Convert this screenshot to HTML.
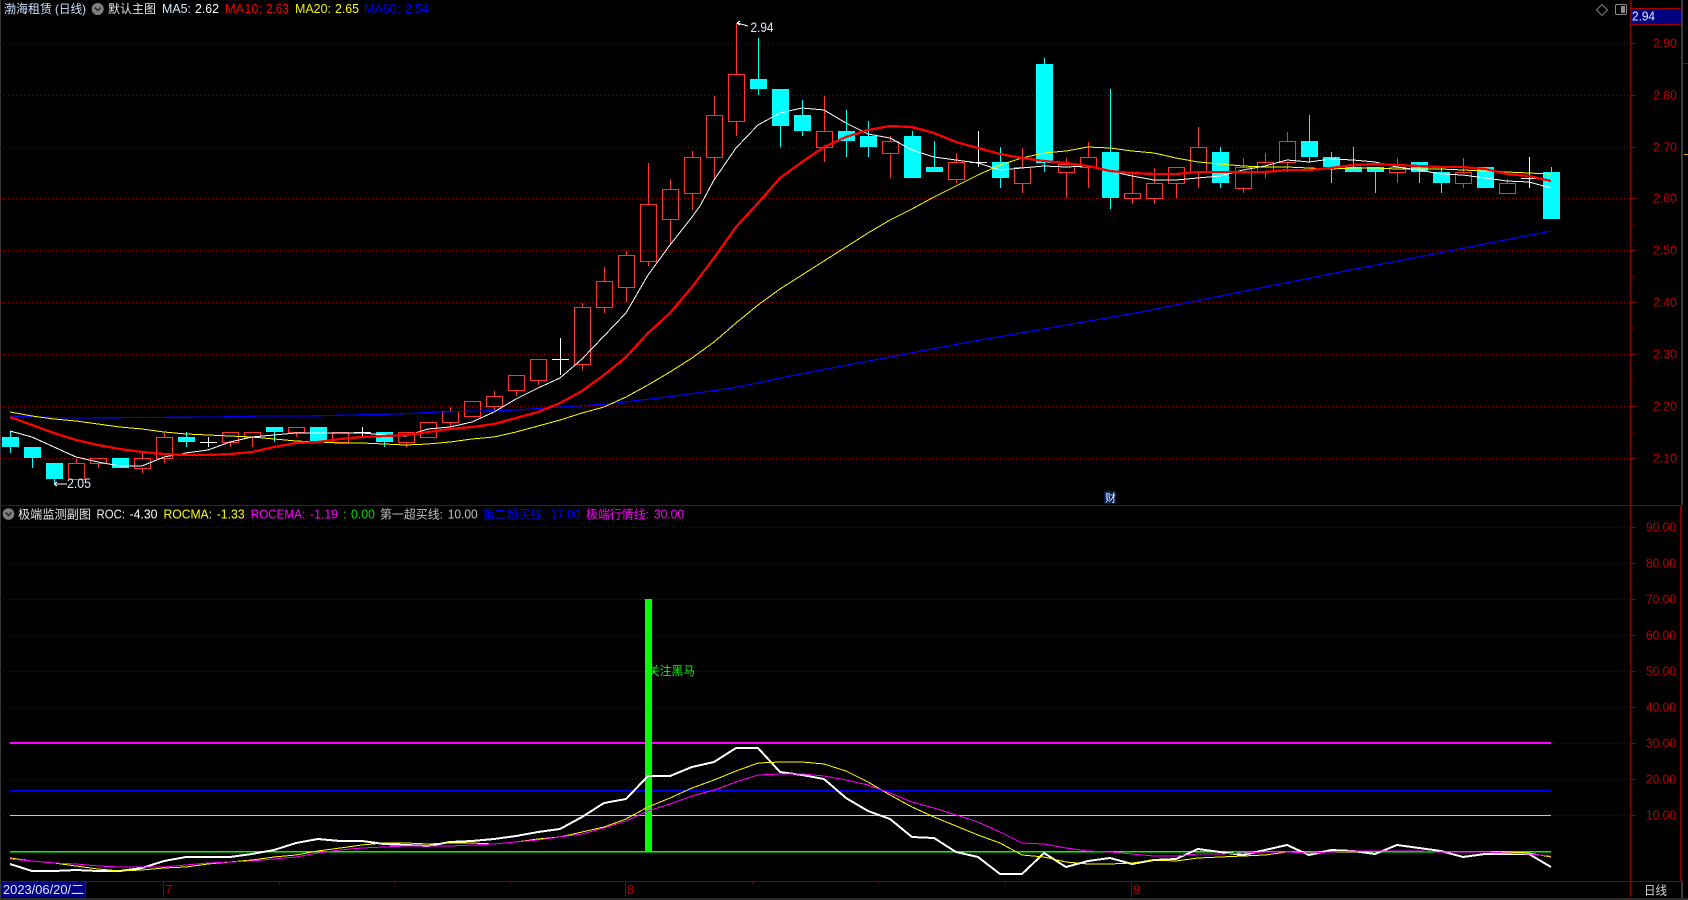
<!DOCTYPE html>
<html lang="zh"><head><meta charset="utf-8"><title>渤海租赁</title>
<style>
html,body{margin:0;padding:0;background:#000;width:1688px;height:900px;overflow:hidden}
svg{display:block}
text{font-family:"Liberation Sans","Noto Sans CJK SC",sans-serif;font-size:13px}
.c{font-size:12px}
.ax{fill:#bb0000}
</style></head><body>
<svg width="1688" height="900" viewBox="0 0 1688 900" xmlns="http://www.w3.org/2000/svg">
<rect width="1688" height="900" fill="#000"/>
<rect x="0" y="0" width="1" height="898" fill="#3a3a3a"/>

<g shape-rendering="crispEdges" fill="none">
<!-- main grid -->
<path stroke="#900000" stroke-dasharray="1 3" d="M0 43.5H1630M0 95.5H1630M0 147.5H1630M0 198.5H1630M0 250.5H1630M0 302.5H1630M0 354.5H1630M0 406.5H1630M0 458.5H1630"/>
<!-- sub grid -->
<path stroke="#700000" stroke-dasharray="1 3" d="M0 527.5H1630M0 563.5H1630M0 599.5H1630M0 635.5H1630M0 671.5H1630M0 707.5H1630M0 743.5H1630M0 779.5H1630M0 815.5H1630"/>
<!-- frame and axis -->
<path stroke="#8a0000" d="M0 505.5H1681M0 881.5H1681M1630.5 0V897M85.5 881V897M163.5 881V897M625.5 881V897M1131.5 881V897M279.5 881V884M394.5 881V884M510.5 881V884M752.5 881V884M878.5 881V884M1005.5 881V884"/>
<path stroke="#8a0000" d="M1630 43.5h6M1630 95.5h6M1630 147.5h6M1630 198.5h6M1630 250.5h6M1630 302.5h6M1630 354.5h6M1630 406.5h6M1630 458.5h6M1630 69.5h3M1630 121.5h3M1630 173.5h3M1630 224.5h3M1630 276.5h3M1630 328.5h3M1630 380.5h3M1630 432.5h3M1630 527.5h6M1630 563.5h6M1630 599.5h6M1630 635.5h6M1630 671.5h6M1630 707.5h6M1630 743.5h6M1630 779.5h6M1630 815.5h6M1630 545.5h3M1630 581.5h3M1630 617.5h3M1630 653.5h3M1630 689.5h3M1630 725.5h3M1630 761.5h3M1630 797.5h3M1630 833.5h3"/>
<rect x="1681" y="0" width="2" height="505" fill="#3a3a3a"/>
<rect x="1680" y="505" width="2" height="376" fill="#800000"/>
<rect x="1681" y="881" width="2" height="17" fill="#3a3a3a"/>
<rect x="1683" y="63" width="5" height="1" fill="#8a0000"/>
<rect x="1684" y="154" width="4" height="1" fill="#e0a000"/>
<rect x="0" y="898" width="1688" height="2" fill="#2b2b2b"/>
<rect x="1631" y="9" width="50" height="15" fill="#000080"/>
<path stroke="#a00000" d="M1630 8.5H1681M1630 24.5H1681"/>

<!-- candles: red hollow -->
<path stroke="#ff3232" d="M68.5 463.5h16v16h-16zM76.5 459V463M90.5 458.5h16v5h-16zM98.5 464V468M134.5 458.5h16v10h-16zM142.5 453V458M142.5 469V473M156.5 437.5h16v21h-16zM164.5 433V437M164.5 459V463M222.5 432.5h16v10h-16zM230.5 443V447M244.5 432.5h16v5h-16zM252.5 438V447M288.5 427.5h16v5h-16zM296.5 433V437M332.5 432.5h16v10h-16zM398.5 432.5h16v10h-16zM406.5 443V447M420.5 422.5h16v15h-16zM442.5 411.5h16v11h-16zM450.5 407V411M450.5 423V427M464.5 401.5h16v15h-16zM486.5 396.5h16v10h-16zM494.5 391V396M494.5 407V411M508.5 375.5h16v15h-16zM516.5 391V396M530.5 359.5h16v21h-16zM538.5 381V385M574.5 307.5h16v57h-16zM582.5 303V307M582.5 365V370M596.5 281.5h16v26h-16zM604.5 267V281M604.5 308V313M618.5 255.5h16v32h-16zM626.5 251V255M626.5 288V302M640.5 204.5h16v57h-16zM648.5 163V204M648.5 262V266M662.5 189.5h16v30h-16zM670.5 179V189M670.5 220V245M684.5 157.5h16v36h-16zM692.5 151V157M692.5 194V210M706.5 115.5h16v42h-16zM714.5 96V115M714.5 158V178M728.5 74.5h16v47h-16zM736.5 23V74M736.5 122V136M816.5 131.5h16v16h-16zM824.5 96V131M824.5 148V162M882.5 141.5h16v12h-16zM890.5 136V141M890.5 154V178M948.5 162.5h16v17h-16zM956.5 153V162M956.5 180V183M1014.5 167.5h16v16h-16zM1022.5 148V167M1022.5 184V193M1058.5 164.5h16v8h-16zM1066.5 158V164M1066.5 173V198M1080.5 157.5h16v10h-16zM1088.5 142V157M1088.5 168V188M1124.5 193.5h16v5h-16zM1132.5 173V193M1132.5 199V204M1146.5 183.5h16v15h-16zM1154.5 168V183M1154.5 199V204M1168.5 167.5h16v16h-16zM1176.5 184V198M1190.5 147.5h16v25h-16zM1198.5 127V147M1198.5 173V188M1235.5 167.5h16v21h-16zM1243.5 158V167M1243.5 189V193M1257.5 162.5h16v9h-16zM1265.5 153V162M1265.5 172V178M1279.5 141.5h16v21h-16zM1287.5 132V141M1287.5 163V172M1389.5 167.5h16v5h-16zM1397.5 158V167M1397.5 173V183M1455.5 172.5h16v11h-16zM1463.5 158V172M1463.5 184V188M1499.5 183.5h16v10h-16zM1507.5 179V183"/>
<!-- candles: cyan -->
<path stroke="#00ffff" d="M10.5 431V453M32.5 447V468M54.5 463V483M186.5 432V447M274.5 427V442M384.5 432V447M758.5 38V95M780.5 89V147M802.5 100V136M846.5 110V157M868.5 121V157M912.5 131V178M934.5 141V172M1000.5 147V188M1044.5 58V172M1110.5 89V209M1220.5 147V188M1309.5 115V162M1331.5 152V183M1353.5 147V172M1375.5 167V193M1419.5 162V183M1441.5 167V193M1551.5 167V219"/>
<path fill="#00ffff" d="M2 437h17v10h-17zM24 447h17v11h-17zM46 463h17v16h-17zM112 458h17v10h-17zM178 437h17v5h-17zM266 427h17v5h-17zM310 427h17v15h-17zM376 432h17v10h-17zM750 79h17v10h-17zM772 89h17v37h-17zM794 115h17v16h-17zM838 131h17v10h-17zM860 136h17v11h-17zM904 136h17v42h-17zM926 167h17v5h-17zM992 162h17v16h-17zM1036 64h17v99h-17zM1102 152h17v46h-17zM1212 152h17v31h-17zM1301 141h17v16h-17zM1323 157h17v10h-17zM1345 167h17v5h-17zM1367 167h17v5h-17zM1411 162h17v10h-17zM1433 172h17v11h-17zM1477 167h17v21h-17zM1543 172h17v47h-17z"/>
<!-- doji -->
<path stroke="#ffffff" d="M200 442.5H217M208.5 437V447M354 432.5H371M362.5 427V437M552 359.5H569M560.5 338V375M970 162.5H987M978.5 131V167M1521 178.5H1538M1529.5 157V188"/>

<!-- MA lines -->
<polyline stroke="#0000ff" stroke-width="1.2" points="10,416 70,418 217,417 263,416 307,416 350,415 397,414 440,412 517,410 607,404 667,397 733,388 800,374 969,342 1141,312 1345,271 1408,259 1551,231"/>
<polyline stroke="#ffff00" stroke-width="1" points="10,412 32,416 54,419 76,421 98,424 120,427 142,429 164,432 186,434 208,435 230,436 252,437 274,439 296,441 318,442 340,443 362,443 384,444 406,445 428,444 450,442 472,439 494,437 516,432 538,426 560,420 582,413 604,407 626,397 648,385 670,372 692,358 714,342 736,323 758,305 780,289 802,275 824,261 846,247 868,233 890,220 912,209 934,197 956,186 978,175 1000,165 1022,158 1044,153 1066,151 1088,147 1110,148 1132,151 1154,153 1176,158 1198,162 1220,164 1243,166 1265,167 1287,167 1309,168 1331,169 1353,168 1375,168 1397,169 1419,169 1441,169 1463,170 1485,171 1507,172 1529,173 1551,174"/>
<polyline stroke="#ffffff" stroke-width="1" points="10,431 32,437 54,447 76,457 98,462 120,466 142,466 164,457 186,453 208,450 230,442 252,437 274,435 296,433 318,433 340,433 362,433 384,435 406,436 428,429 450,427 472,422 494,412 516,399 538,388 560,378 582,359 604,336 626,313 648,275 670,245 692,217 700,206 714,180 736,148 758,125 780,113 802,108 824,110 846,123 868,134 890,138 912,150 934,157 956,160 978,163 1000,170 1022,168 1044,166 1066,167 1088,166 1110,171 1132,176 1154,180 1176,180 1198,178 1220,176 1243,170 1265,166 1287,160 1309,162 1331,159 1353,160 1375,162 1397,167 1419,170 1441,174 1463,175 1485,178 1507,181 1529,182 1551,188"/>
<polyline stroke="#ff0000" stroke-width="2.3" points="10,417 32,425 54,433 76,440 98,445 120,449 142,452 164,454 186,455 208,455 230,454 252,452 274,447 296,443 318,442 340,439 362,437 384,436 406,435 428,432 450,429 472,427 494,424 516,418 538,412 560,403 582,391 604,375 626,357 648,333 670,313 692,287 714,258 736,227 758,203 780,178 802,162 824,147 846,137 868,130 890,126 912,127 934,133 956,142 978,148 1000,154 1022,158 1044,161 1066,163 1088,166 1110,171 1132,173 1154,174 1176,174 1198,172 1220,172 1243,172 1265,172 1287,170 1309,170 1331,168 1353,165 1375,164 1397,165 1419,166 1441,167 1463,167 1485,169 1507,174 1529,176 1551,181"/>

<!-- sub panel -->
<rect x="10" y="742" width="1541" height="2" fill="#ff00ff"/>
<rect x="10" y="790" width="1541" height="1.4" fill="#0000ff"/>
<rect x="10" y="815" width="1541" height="1" fill="#c8c8c8"/>
<rect x="10" y="851" width="1541" height="1.4" fill="#00ff00"/>
<rect x="645" y="599" width="7" height="252" fill="#00ff00"/>
<polyline stroke="#ffffff" stroke-width="2" points="10,864 32,871 54,871 76,870 98,871 120,871 142,868 164,861 186,857 208,857 230,857 252,854 274,850 296,843 318,839 340,841 362,841 384,844 406,845 428,846 450,842 472,841 494,839 516,836 538,832 560,829 582,817 604,803 626,799 648,776 670,776 692,767 714,762 736,748 758,748 780,772 802,775 824,779 846,798 868,811 890,819 912,837 934,838 956,852 978,857 1000,874 1022,874 1044,853 1066,867 1088,861 1110,858 1132,864 1154,860 1176,859 1198,849 1220,852 1243,855 1265,850 1287,845 1309,855 1331,850 1353,851 1375,854 1397,845 1419,848 1441,851 1463,857 1485,854 1507,854 1529,854 1551,867"/>
<polyline stroke="#ffff00" stroke-width="1" points="10,858 32,861 54,863 76,866 98,869 120,871 142,870 164,868 186,867 208,864 230,862 252,860 274,857 296,855 318,851 340,848 362,845 384,843 406,843 428,844 450,843 472,843 494,844 516,842 538,839 560,837 582,832 604,827 626,819 648,807 670,798 692,788 714,780 736,771 758,763 780,762 802,762 824,764 846,771 868,782 890,795 912,807 934,817 956,826 978,835 1000,843 1022,855 1044,857 1066,862 1088,864 1110,864 1132,863 1154,860 1176,861 1198,858 1220,857 1243,856 1265,855 1287,852 1309,853 1331,852 1353,852 1375,851 1397,851 1419,851 1441,852 1463,852 1485,852 1507,852 1529,853 1551,857"/>
<polyline stroke="#ff00ff" stroke-width="1" points="10,859 32,861 54,863 76,864 98,866 120,867 142,867 164,867 186,865 208,863 230,862 252,861 274,859 296,857 318,853 340,850 362,848 384,847 406,846 428,846 450,846 472,845 494,844 516,842 538,840 560,837 582,834 604,828 626,821 648,811 670,804 692,796 714,790 736,782 758,775 780,774 802,774 824,776 846,780 868,785 890,793 912,802 934,808 956,815 978,822 1000,832 1022,843 1044,844 1066,848 1088,851 1110,852 1132,854 1154,856 1176,856 1198,854 1220,854 1243,853 1265,852 1287,852 1309,853 1331,852 1353,851 1375,851 1397,851 1419,851 1441,852 1463,852 1485,852 1507,853 1529,854 1551,856"/>
<!-- high/low arrows -->
<path stroke="#ffffff" d="M737 23L748 26M737 23l3 -2M737 23l3 2M54 484H67M54 484l3 -2M54 484l3 2"/>
<rect x="1" y="882" width="84" height="15" fill="#000080"/>
<rect x="1104" y="491" width="12" height="13" fill="#001a50"/>
</g>

<!-- legend top -->
<g>
<text class="c" x="4" y="13" fill="#cfe2ff" textLength="48" lengthAdjust="spacingAndGlyphs">渤海租赁</text>
<text class="c" x="55" y="13" fill="#cfe2ff" textLength="31" lengthAdjust="spacingAndGlyphs">(日线)</text>
<circle cx="97.7" cy="9" r="6" fill="#808080"/>
<path d="M94.7 7.5l3 3 3-3" fill="none" stroke="#222" stroke-width="1.4"/>
<text class="c" x="108" y="13" fill="#e6e6e6" textLength="48" lengthAdjust="spacingAndGlyphs">默认主图</text>
<text x="162" y="13" fill="#d6ecff" textLength="29" lengthAdjust="spacingAndGlyphs">MA5:</text>
<text x="195" y="13" fill="#ffffff" textLength="24" lengthAdjust="spacingAndGlyphs">2.62</text>
<text x="225" y="13" fill="#ee0000" textLength="37" lengthAdjust="spacingAndGlyphs">MA10:</text>
<text x="266" y="13" fill="#ff0000" textLength="23" lengthAdjust="spacingAndGlyphs">2.63</text>
<text x="295" y="13" fill="#eeee00" textLength="36" lengthAdjust="spacingAndGlyphs">MA20:</text>
<text x="335" y="13" fill="#ffff00" textLength="24" lengthAdjust="spacingAndGlyphs">2.65</text>
<text x="364" y="13" fill="#0000f0" textLength="36" lengthAdjust="spacingAndGlyphs">MA60:</text>
<text x="405" y="13" fill="#0000ff" textLength="24" lengthAdjust="spacingAndGlyphs">2.54</text>
</g>
<!-- top right icons -->
<path d="M1602 4.5l5.5 5.5-5.5 5.5-5.5-5.5z" fill="none" stroke="#808080"/>
<rect x="1615.5" y="4.5" width="11" height="10" rx="1.5" fill="none" stroke="#8a8a8a"/>
<rect x="1621" y="6" width="4" height="7" fill="#8a8a8a"/>
<text x="1632" y="20.5" fill="#e8f0ff" textLength="23" lengthAdjust="spacingAndGlyphs">2.94</text>

<!-- price axis labels -->
<g class="ax">
<text x="1653" y="47.5" textLength="24" lengthAdjust="spacingAndGlyphs">2.90</text>
<text x="1653" y="99.5" textLength="24" lengthAdjust="spacingAndGlyphs">2.80</text>
<text x="1653" y="151.5" textLength="24" lengthAdjust="spacingAndGlyphs">2.70</text>
<text x="1653" y="202.5" textLength="24" lengthAdjust="spacingAndGlyphs">2.60</text>
<text x="1653" y="254.5" textLength="24" lengthAdjust="spacingAndGlyphs">2.50</text>
<text x="1653" y="306.5" textLength="24" lengthAdjust="spacingAndGlyphs">2.40</text>
<text x="1653" y="358.5" textLength="24" lengthAdjust="spacingAndGlyphs">2.30</text>
<text x="1653" y="410.5" textLength="24" lengthAdjust="spacingAndGlyphs">2.20</text>
<text x="1653" y="462.5" textLength="24" lengthAdjust="spacingAndGlyphs">2.10</text>
<text x="1646" y="531.5" textLength="30" lengthAdjust="spacingAndGlyphs">90.00</text>
<text x="1646" y="567.5" textLength="30" lengthAdjust="spacingAndGlyphs">80.00</text>
<text x="1646" y="603.5" textLength="30" lengthAdjust="spacingAndGlyphs">70.00</text>
<text x="1646" y="639.5" textLength="30" lengthAdjust="spacingAndGlyphs">60.00</text>
<text x="1646" y="675.5" textLength="30" lengthAdjust="spacingAndGlyphs">50.00</text>
<text x="1646" y="711.5" textLength="30" lengthAdjust="spacingAndGlyphs">40.00</text>
<text x="1646" y="747.5" textLength="30" lengthAdjust="spacingAndGlyphs">30.00</text>
<text x="1646" y="783.5" textLength="30" lengthAdjust="spacingAndGlyphs">20.00</text>
<text x="1646" y="819.5" textLength="30" lengthAdjust="spacingAndGlyphs">10.00</text>
<text x="165" y="894">7</text>
<text x="627" y="894">8</text>
<text x="1133" y="894">9</text>
</g>

<!-- chart labels -->
<text x="750.5" y="32" fill="#dfeaf5" textLength="23" lengthAdjust="spacingAndGlyphs" style="font-size:14px">2.94</text>
<text x="67" y="488" fill="#dfeaf5" textLength="24" lengthAdjust="spacingAndGlyphs" style="font-size:14px">2.05</text>
<text x="1105" y="501.5" style="font-size:11px" fill="#e8f0ff">财</text>
<text class="c" x="648" y="675" fill="#00ff00" textLength="47" lengthAdjust="spacingAndGlyphs">关注黑马</text>

<!-- sub legend -->
<g>
<circle cx="8.5" cy="514" r="5.8" fill="#808080"/>
<path d="M5.7 512.5l2.8 3 2.8-3" fill="none" stroke="#222" stroke-width="1.4"/>
<text class="c" x="18" y="518.5" fill="#e6e6e6" textLength="73" lengthAdjust="spacingAndGlyphs">极端监测副图</text>
<text x="96.5" y="518.5" fill="#f0f0f0" textLength="28.5" lengthAdjust="spacingAndGlyphs">ROC:</text>
<text x="129.5" y="518.5" fill="#ffffff" textLength="28" lengthAdjust="spacingAndGlyphs">-4.30</text>
<text x="163.5" y="518.5" fill="#ffff00" textLength="48.5" lengthAdjust="spacingAndGlyphs">ROCMA:</text>
<text x="216.7" y="518.5" fill="#ffff00" textLength="28" lengthAdjust="spacingAndGlyphs">-1.33</text>
<text x="250.7" y="518.5" fill="#ff00ff" textLength="54.5" lengthAdjust="spacingAndGlyphs">ROCEMA:</text>
<text x="310" y="518.5" fill="#ff00ff" textLength="28" lengthAdjust="spacingAndGlyphs">-1.19</text>
<text x="343" y="518.5" fill="#00dd00">:</text>
<text x="351" y="518.5" fill="#00dd00" textLength="24" lengthAdjust="spacingAndGlyphs">0.00</text>
<text class="c" x="380" y="518.5" fill="#c0c0c0" textLength="63" lengthAdjust="spacingAndGlyphs">第一超买线:</text>
<text x="447.7" y="518.5" fill="#c0c0c0" textLength="30" lengthAdjust="spacingAndGlyphs">10.00</text>
<text class="c" x="482.5" y="518.5" fill="#0000ff" textLength="63" lengthAdjust="spacingAndGlyphs">第二超买线:</text>
<text x="550.5" y="518.5" fill="#0000ff" textLength="30" lengthAdjust="spacingAndGlyphs">17.00</text>
<text class="c" x="586" y="518.5" fill="#ff00ff" textLength="63" lengthAdjust="spacingAndGlyphs">极端行情线:</text>
<text x="654" y="518.5" fill="#ff00ff" textLength="30" lengthAdjust="spacingAndGlyphs">30.00</text>
</g>

<!-- bottom -->
<text x="3" y="894" fill="#dfe8ff" textLength="81" lengthAdjust="spacingAndGlyphs">2023/06/20/二</text>
<text class="c" x="1644" y="894.5" fill="#d8d8d8" textLength="23" lengthAdjust="spacingAndGlyphs">日线</text>
</svg>
</body></html>
